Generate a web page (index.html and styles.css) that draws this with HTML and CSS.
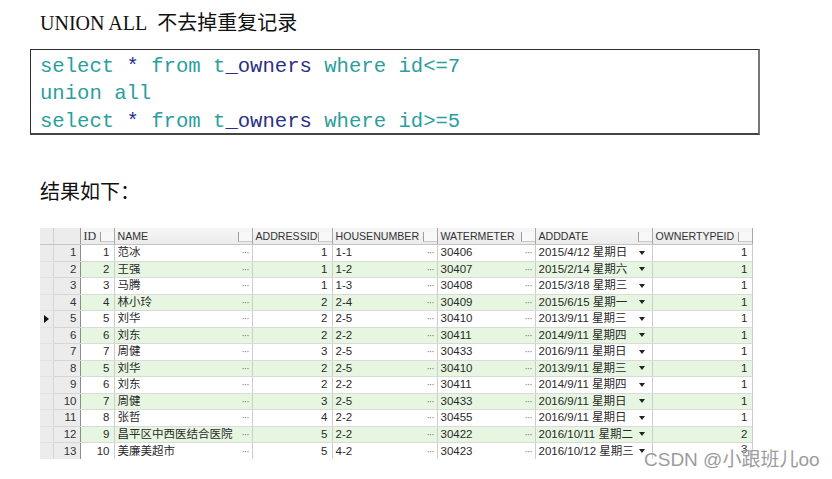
FILE: index.html
```html
<!DOCTYPE html>
<html lang="zh">
<head>
<meta charset="utf-8">
<title>UNION ALL</title>
<link rel="stylesheet" href="styles.css">
</head>
<body>
<div class="page">
  <h1 class="title">UNION ALL<span class="title-cn">不去掉重复记录</span></h1>
  <pre class="code"><span class="kw">select</span> <span class="op">*</span> <span class="kw">from</span> <span class="kw">t</span><span class="id">_owners</span> <span class="kw">where</span> <span class="kw">id&lt;=7</span>
<span class="kw">union all</span>
<span class="kw">select</span> <span class="op">*</span> <span class="kw">from</span> <span class="kw">t</span><span class="id">_owners</span> <span class="kw">where</span> <span class="kw">id&gt;=5</span></pre>
  <h2 class="result">结果如下<span class="colon">：</span></h2>
  <table class="grid">
    <colgroup>
      <col class="c-ind"><col class="c-num"><col class="c-id"><col class="c-name"><col class="c-addr"><col class="c-house"><col class="c-water"><col class="c-date"><col class="c-type">
    </colgroup>
    <thead>
      <tr>
        <th class="hd-side"></th>
        <th class="hd-side hd-num"></th>
        <th><div class="hcell"><span class="hd-serif">ID</span><i class="sortbox"></i></div></th>
        <th><div class="hcell"><span>NAME</span><i class="sortbox"></i></div></th>
        <th><div class="hcell"><span>ADDRESSID</span><i class="sortbox"></i></div></th>
        <th><div class="hcell"><span>HOUSENUMBER</span><i class="sortbox"></i></div></th>
        <th><div class="hcell"><span>WATERMETER</span><i class="sortbox"></i></div></th>
        <th><div class="hcell"><span>ADDDATE</span><i class="sortbox"></i></div></th>
        <th><div class="hcell"><span>OWNERTYPEID</span><i class="sortbox"></i></div></th>
      </tr>
    </thead>
    <tbody>
      <tr><td class="ind"></td><td class="num">1</td><td class="r">1</td><td><div class="cell"><span>范冰</span><i class="dots">···</i></div></td><td class="r">1</td><td><div class="cell"><span>1-1</span><i class="dots">···</i></div></td><td><div class="cell"><span>30406</span><i class="dots">···</i></div></td><td><div class="cell"><span>2015/4/12 星期日</span><i class="drop"></i></div></td><td class="r">1</td></tr>
      <tr class="alt"><td class="ind"></td><td class="num">2</td><td class="r">2</td><td><div class="cell"><span>王强</span><i class="dots">···</i></div></td><td class="r">1</td><td><div class="cell"><span>1-2</span><i class="dots">···</i></div></td><td><div class="cell"><span>30407</span><i class="dots">···</i></div></td><td><div class="cell"><span>2015/2/14 星期六</span><i class="drop"></i></div></td><td class="r">1</td></tr>
      <tr><td class="ind"></td><td class="num">3</td><td class="r">3</td><td><div class="cell"><span>马腾</span><i class="dots">···</i></div></td><td class="r">1</td><td><div class="cell"><span>1-3</span><i class="dots">···</i></div></td><td><div class="cell"><span>30408</span><i class="dots">···</i></div></td><td><div class="cell"><span>2015/3/18 星期三</span><i class="drop"></i></div></td><td class="r">1</td></tr>
      <tr class="alt"><td class="ind"></td><td class="num">4</td><td class="r">4</td><td><div class="cell"><span>林小玲</span><i class="dots">···</i></div></td><td class="r">2</td><td><div class="cell"><span>2-4</span><i class="dots">···</i></div></td><td><div class="cell"><span>30409</span><i class="dots">···</i></div></td><td><div class="cell"><span>2015/6/15 星期一</span><i class="drop"></i></div></td><td class="r">1</td></tr>
      <tr><td class="ind"><i class="cur"></i></td><td class="num">5</td><td class="r">5</td><td><div class="cell"><span>刘华</span><i class="dots">···</i></div></td><td class="r">2</td><td><div class="cell"><span>2-5</span><i class="dots">···</i></div></td><td><div class="cell"><span>30410</span><i class="dots">···</i></div></td><td><div class="cell"><span>2013/9/11 星期三</span><i class="drop"></i></div></td><td class="r">1</td></tr>
      <tr class="alt"><td class="ind"></td><td class="num">6</td><td class="r">6</td><td><div class="cell"><span>刘东</span><i class="dots">···</i></div></td><td class="r">2</td><td><div class="cell"><span>2-2</span><i class="dots">···</i></div></td><td><div class="cell"><span>30411</span><i class="dots">···</i></div></td><td><div class="cell"><span>2014/9/11 星期四</span><i class="drop"></i></div></td><td class="r">1</td></tr>
      <tr><td class="ind"></td><td class="num">7</td><td class="r">7</td><td><div class="cell"><span>周健</span><i class="dots">···</i></div></td><td class="r">3</td><td><div class="cell"><span>2-5</span><i class="dots">···</i></div></td><td><div class="cell"><span>30433</span><i class="dots">···</i></div></td><td><div class="cell"><span>2016/9/11 星期日</span><i class="drop"></i></div></td><td class="r">1</td></tr>
      <tr class="alt"><td class="ind"></td><td class="num">8</td><td class="r">5</td><td><div class="cell"><span>刘华</span><i class="dots">···</i></div></td><td class="r">2</td><td><div class="cell"><span>2-5</span><i class="dots">···</i></div></td><td><div class="cell"><span>30410</span><i class="dots">···</i></div></td><td><div class="cell"><span>2013/9/11 星期三</span><i class="drop"></i></div></td><td class="r">1</td></tr>
      <tr><td class="ind"></td><td class="num">9</td><td class="r">6</td><td><div class="cell"><span>刘东</span><i class="dots">···</i></div></td><td class="r">2</td><td><div class="cell"><span>2-2</span><i class="dots">···</i></div></td><td><div class="cell"><span>30411</span><i class="dots">···</i></div></td><td><div class="cell"><span>2014/9/11 星期四</span><i class="drop"></i></div></td><td class="r">1</td></tr>
      <tr class="alt"><td class="ind"></td><td class="num">10</td><td class="r">7</td><td><div class="cell"><span>周健</span><i class="dots">···</i></div></td><td class="r">3</td><td><div class="cell"><span>2-5</span><i class="dots">···</i></div></td><td><div class="cell"><span>30433</span><i class="dots">···</i></div></td><td><div class="cell"><span>2016/9/11 星期日</span><i class="drop"></i></div></td><td class="r">1</td></tr>
      <tr><td class="ind"></td><td class="num">11</td><td class="r">8</td><td><div class="cell"><span>张哲</span><i class="dots">···</i></div></td><td class="r">4</td><td><div class="cell"><span>2-2</span><i class="dots">···</i></div></td><td><div class="cell"><span>30455</span><i class="dots">···</i></div></td><td><div class="cell"><span>2016/9/11 星期日</span><i class="drop"></i></div></td><td class="r">1</td></tr>
      <tr class="alt"><td class="ind"></td><td class="num">12</td><td class="r">9</td><td><div class="cell"><span>昌平区中西医结合医院</span><i class="dots">···</i></div></td><td class="r">5</td><td><div class="cell"><span>2-2</span><i class="dots">···</i></div></td><td><div class="cell"><span>30422</span><i class="dots">···</i></div></td><td><div class="cell"><span>2016/10/11 星期二</span><i class="drop"></i></div></td><td class="r">2</td></tr>
      <tr class="last"><td class="ind"></td><td class="num">13</td><td class="r">10</td><td><div class="cell"><span>美廉美超市</span><i class="dots">···</i></div></td><td class="r">5</td><td><div class="cell"><span>4-2</span><i class="dots">···</i></div></td><td><div class="cell"><span>30423</span><i class="dots">···</i></div></td><td><div class="cell"><span>2016/10/12 星期三</span><i class="drop"></i></div></td><td class="r last-type">3</td></tr>
    </tbody>
  </table>
  <div class="watermark">CSDN @小跟班儿oo</div>
</div>
</body>
</html>
```

FILE: styles.css
```css
* { box-sizing: border-box; }
html, body { margin: 0; padding: 0; background: #fff; }
body { width: 832px; height: 479px; overflow: hidden; }

.page {
  position: relative;
  padding: 10px 0 0 30px;
  height: 479px;
}

.title {
  margin: 0;
  padding-left: 10px;
  height: 24px;
  font-family: "Liberation Serif", "Noto Sans CJK SC", serif;
  font-weight: normal;
  font-size: 20px;
  line-height: 24px;
  color: #111;
}
.title-cn {
  margin-left: 10px;
  font-family: "Noto Sans CJK SC", sans-serif;
}

.code {
  margin: 15px 0 0 0;
  width: 730px;
  height: 85.5px;
  padding: 2.75px 9px 0;
  border: 1px solid #2e2e2e;
  border-right: 2px solid #777;
  border-bottom: 2px solid #444;
  font-family: "Liberation Mono", monospace;
  font-size: 20.6px;
  line-height: 27.5px;
  color: #2a9d9d;
  overflow: hidden;
}
.kw { color: #2b9e9e; }
.op { color: #25308a; }
.id { color: #2c2f86; }

.result {
  margin: 44.5px 0 0 0;
  padding-left: 10px;
  height: 24px;
  font-family: "Noto Sans CJK SC", sans-serif;
  font-weight: normal;
  font-size: 20px;
  line-height: 24px;
  color: #111;
}
.colon { font-family: "Noto Sans CJK TC", sans-serif; }

.grid {
  margin: 25px 0 0 10px;
  width: 712px;
  table-layout: fixed;
  border-collapse: collapse;
  font-family: "Liberation Sans", "Noto Sans CJK SC", sans-serif;
  font-size: 11.5px;
  color: #2a2a2a;
}
.c-ind { width: 13px; }
.c-num { width: 27px; }
.c-id { width: 34px; }
.c-name { width: 138px; }
.c-addr { width: 80px; }
.c-house { width: 105px; }
.c-water { width: 98px; }
.c-date { width: 117px; }
.c-type { width: 100px; }

.grid th {
  height: 16.5px;
  padding: 0 0 0 3px;
  background: linear-gradient(#f6f6f6, #ebebeb);
  border-right: 1px solid #a8a8a8;
  border-bottom: 1px solid #c4c4c4;
  font-weight: normal;
  font-size: 10.6px;
  text-align: left;
  line-height: 15px;
  color: #333;
  overflow: hidden;
  white-space: nowrap;
}
.grid th.hd-side { padding: 0; border-right: 1px solid #d0d0d0; background: #ececec; }
.grid th.hd-num { border-right: 1px solid #9a9a9a; }
.hcell {
  display: flex;
  align-items: flex-end;
  justify-content: space-between;
  height: 15px;
}
.hcell span { align-self: center; }
.hd-serif { font-family: "Liberation Serif", serif; font-size: 12px; }
.sortbox {
  display: block;
  width: 14px;
  height: 10px;
  margin-bottom: 2px;
  background: #f8f8f8;
  border-left: 1px solid #9c9c9c;
  border-bottom: 1px solid #c8c8c8;
  flex: none;
}

.grid td {
  height: 16.5px;
  padding: 0 4px 0 3px;
  border-right: 1px solid #cdcdcd;
  border-bottom: 1px solid #dadada;
  line-height: 15px;
  white-space: nowrap;
  overflow: hidden;
}
.grid tr.alt td { background: #e6f6e1; }
.grid tr.last td { border-bottom: none; }
.grid td.r { text-align: right; }
.grid td.ind,
.grid tr.alt td.ind { background: #ececec; padding: 0; border-right: 1px solid #d6d6d6; border-bottom-color: #e2e2e2; }
.grid td.num,
.grid tr.alt td.num { background: #ececec; text-align: right; padding-right: 3px; border-right: 1px solid #8c8c8c; border-bottom-color: #d6d6d6; color: #333; }
.grid td.last-type { vertical-align: top; line-height: 12px; }

.cell {
  display: flex;
  align-items: center;
  justify-content: space-between;
  height: 15px;
}
.dots {
  font-style: normal;
  font-size: 10px;
  letter-spacing: -1px;
  color: #7a7a7a;
  margin-right: -1px;
}
.drop {
  display: block;
  width: 0;
  height: 0;
  margin-right: 3px;
  border-left: 3px solid transparent;
  border-right: 3px solid transparent;
  border-top: 4px solid #222;
}
.cur {
  display: block;
  width: 0;
  height: 0;
  margin: 0 auto;
  border-top: 4px solid transparent;
  border-bottom: 4px solid transparent;
  border-left: 5px solid #111;
}

.watermark {
  position: absolute;
  left: 644px;
  top: 449px;
  font-family: "Liberation Sans", "Noto Sans CJK SC", sans-serif;
  font-size: 19px;
  line-height: 22px;
  color: #9c9c9c;
  white-space: nowrap;
  text-shadow: 0 0 1px #fff;
}
```
